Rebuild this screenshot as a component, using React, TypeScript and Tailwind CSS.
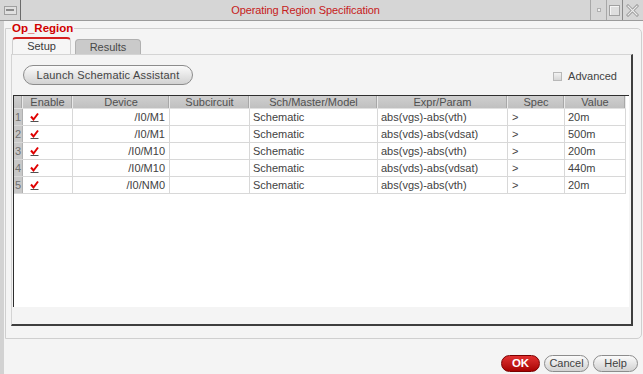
import React from "react";

const rows = [
  { n: "1", dev: "/I0/M1", expr: "abs(vgs)-abs(vth)", val: "20m" },
  { n: "2", dev: "/I0/M1", expr: "abs(vds)-abs(vdsat)", val: "500m" },
  { n: "3", dev: "/I0/M10", expr: "abs(vgs)-abs(vth)", val: "200m" },
  { n: "4", dev: "/I0/M10", expr: "abs(vds)-abs(vdsat)", val: "440m" },
  { n: "5", dev: "/I0/NM0", expr: "abs(vgs)-abs(vth)", val: "20m" },
];

function Check() {
  return (
    <svg width="9" height="11" viewBox="0 0 9 11">
      <path d="M1 4.5 L3.5 7.5 L8 1.5" fill="none" stroke="#e00000" strokeWidth="2" />
      <path d="M0.5 9.5 H8.5" stroke="#505050" strokeWidth="1" />
    </svg>
  );
}

function HeadCell({ w, children }: { w: string; children?: React.ReactNode }) {
  return (
    <div className={`${w} h-full flex items-center justify-center border-r border-r-[#e8e8e8] shadow-[inset_-1px_0_0_#a8a8a8]`}>
      {children}
    </div>
  );
}

export default function App() {
  return (
    <div className="w-[643px] h-[374px] bg-[#f4f4f4] flex flex-col overflow-hidden font-['Liberation_Sans',Arial,sans-serif] text-[11px] text-[#424242]">
      {/* title bar */}
      <div className="h-[21px] flex bg-[#d6d6d6] border-b border-b-[#9a9a9a] relative">
        <div className="w-[21px] h-full border-r border-r-[#6a6a6a] flex items-center justify-center">
          <div className="w-[13px] h-[9px] border border-[#a0a0a0] bg-[#e0e0e0] flex items-center justify-center">
            <div className="w-[8px] h-[2px] bg-[#8a8a8a]" />
          </div>
        </div>
        <div className="flex-1 flex items-center justify-center text-[#c62020] text-[11px] tracking-[-0.1px]">
          Operating Region Specification
        </div>
        <div className="w-[16px] h-full border-l border-l-[#a8a8a8] flex items-center justify-center">
          <div className="w-[4px] h-[4px] bg-[#f0f0f0] border border-[#b0b0b0]" />
        </div>
        <div className="w-[16px] h-full border-l border-l-[#a8a8a8] flex items-center justify-center">
          <div className="w-[11px] h-[11px] border border-[#a0a0a0] bg-[#dedede] shadow-[inset_1px_1px_0_#f4f4f4]" />
        </div>
        <div className="w-[19px] mr-[2px] h-full border-l border-l-[#8a8a8a] flex items-center justify-center">
          <svg width="13" height="13" viewBox="0 0 13 13">
            <path d="M2 2 L11 11 M11 2 L2 11" stroke="#9a9a9a" strokeWidth="3" strokeLinecap="square" />
            <path d="M2 2 L11 11 M11 2 L2 11" stroke="#eeeeee" strokeWidth="1.1" strokeLinecap="square" />
          </svg>
        </div>
      </div>

      {/* body */}
      <div className="flex-1 flex">
        <div className="w-[4px] bg-[#d2d2d2]" />
        <div className="flex-1 flex flex-col pl-[1px]">
          {/* group box */}
          <div className="mt-[7px] w-[637px] h-[311px] border border-[#cfcfcf] rounded-tr-[5px] rounded-br-[5px] relative flex flex-col pl-[5px] pt-[8px]">
            <div className="absolute left-[5px] top-[-7px] px-[1px] bg-[#f4f4f4] text-[#d10000] font-bold text-[11.5px] leading-[13px]">
              Op_Region
            </div>
            {/* tabs */}
            <div className="flex items-end ml-[1px] h-[17px] gap-[4px]">
              <div className="w-[59px] h-[17px] rounded-t-[4px] border-t-2 border-t-[#d52020] border-x border-x-[#cfcfcf] bg-[#f6f6f6] flex items-center justify-center text-[#3a3a3a]">
                Setup
              </div>
              <div className="w-[66px] h-[15px] rounded-t-[4px] border border-[#b0b0b0] border-b-0 bg-[#cacaca] flex items-center justify-center text-[#484848]">
                Results
              </div>
            </div>
            {/* pane */}
            <div className="w-[622px] h-[272px] border-l border-t border-[#d4d4d4] border-r-2 border-b-2 border-r-[#3e3e3e] border-b-[#3e3e3e] flex flex-col pt-[10px]">
              <div className="flex items-center justify-between pl-[11px] pr-[14px]">
                <div className="w-[170px] h-[20px] rounded-full border border-[#8c8c8c] bg-linear-to-b from-[#fbfbfb] to-[#d2d2d2] flex items-center justify-center text-[#444] tracking-[0.2px]">
                  Launch Schematic Assistant
                </div>
                <div className="flex items-center gap-[6px] mt-[2px]">
                  <div className="w-[9px] h-[9px] border border-[#b8b8b8] bg-linear-to-b from-[#f2f2f2] to-[#d6d6d6]" />
                  <span>Advanced</span>
                </div>
              </div>
              {/* table */}
              <div className="mt-[10px] ml-[1px] w-[616px] h-[212px] bg-white border-t border-l border-[#2e2e2e] flex flex-col">
                <div className="h-[13px] flex bg-linear-to-b from-[#cfcfcf] to-[#c0c0c0] text-[#505050] w-[612px] border-b border-b-[#e0e0e0]">
                  <HeadCell w="w-[9px]" />
                  <HeadCell w="w-[50px]">Enable</HeadCell>
                  <HeadCell w="w-[97px]">Device</HeadCell>
                  <HeadCell w="w-[80px]">Subcircuit</HeadCell>
                  <HeadCell w="w-[128px]">Sch/Master/Model</HeadCell>
                  <HeadCell w="w-[130px]">Expr/Param</HeadCell>
                  <HeadCell w="w-[57px]">Spec</HeadCell>
                  <HeadCell w="w-[61px]">Value</HeadCell>
                </div>
                {rows.map((r) => (
                  <div key={r.n} className="h-[17px] flex w-[612px] border-b border-b-[#d8d8d8]">
                    <div className="w-[9px] bg-[#c8c8c8] text-[#707070] flex items-center pl-[1px] border-r border-r-[#b0b0b0]">
                      {r.n}
                    </div>
                    <div className="w-[50px] flex items-center pl-[7px] border-r border-r-[#d8d8d8]">
                      <Check />
                    </div>
                    <div className="w-[97px] flex items-center justify-end pr-[4px] border-r border-r-[#d8d8d8]">
                      {r.dev}
                    </div>
                    <div className="w-[80px] border-r border-r-[#d8d8d8]" />
                    <div className="w-[128px] flex items-center pl-[3px] border-r border-r-[#d8d8d8]">
                      Schematic
                    </div>
                    <div className="w-[130px] flex items-center pl-[3px] border-r border-r-[#d8d8d8]">
                      {r.expr}
                    </div>
                    <div className="w-[57px] flex items-center pl-[4px] border-r border-r-[#d8d8d8]">
                      &gt;
                    </div>
                    <div className="w-[61px] flex items-center pl-[3px] border-r border-r-[#d8d8d8]">
                      {r.val}
                    </div>
                  </div>
                ))}
              </div>
            </div>
          </div>
          {/* bottom buttons */}
          <div className="flex-1 flex justify-end items-start pt-[16px] pr-[5px] gap-[4px]">
            <div className="w-[39px] h-[17px] rounded-full border border-[#7a0000] bg-linear-to-b from-[#e23030] to-[#a80000] text-white font-bold flex items-center justify-center text-[11.5px]">
              OK
            </div>
            <div className="w-[45px] h-[17px] rounded-full border border-[#8c8c8c] bg-linear-to-b from-[#fbfbfb] to-[#d2d2d2] flex items-center justify-center">
              Cancel
            </div>
            <div className="w-[45px] h-[17px] rounded-full border border-[#8c8c8c] bg-linear-to-b from-[#fbfbfb] to-[#d2d2d2] flex items-center justify-center">
              Help
            </div>
          </div>
        </div>
      </div>
    </div>
  );
}
